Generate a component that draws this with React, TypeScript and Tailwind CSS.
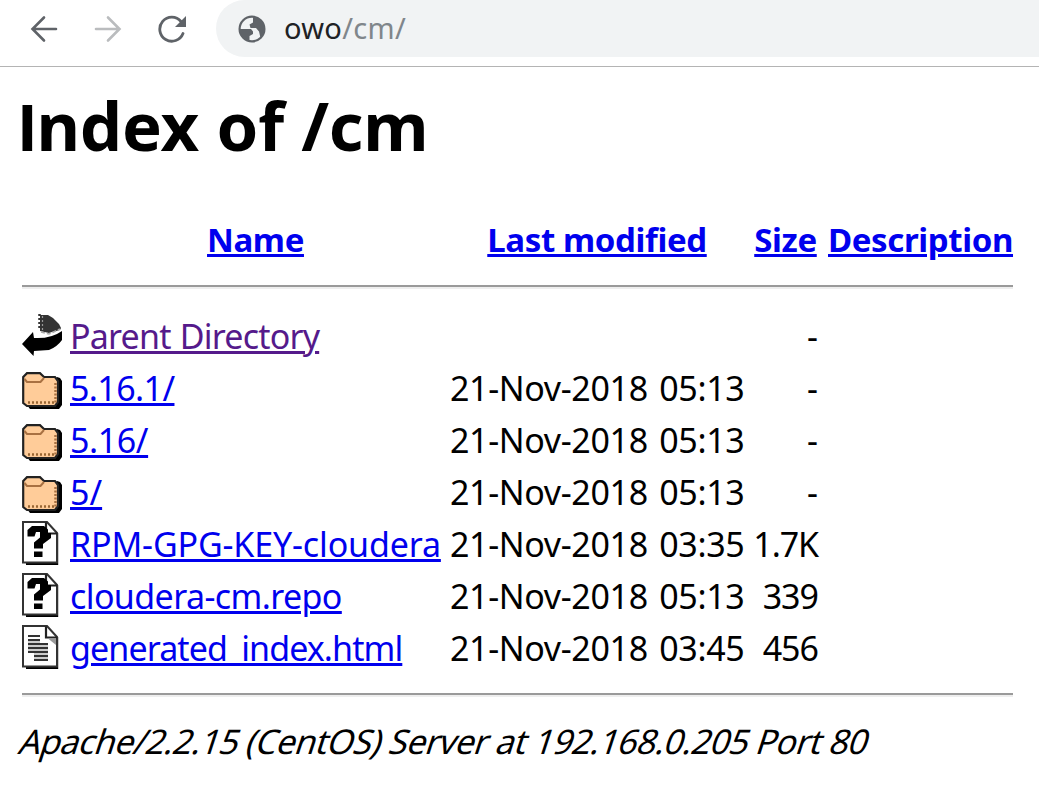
import { ReactNode } from "react";

function BackIcon() {
  return (
    <svg className="block" width="40" height="44" viewBox="0 0 40 44">
      <path d="M18 2H26L31 5L37 11L39 15L38 17L30 19L27 20L18 18Z" fill="#333" />
      <path d="M17.500 1V17" stroke="#333" strokeWidth="2.500" strokeDasharray="2 2" />
      <path d="M20.500 3V18" stroke="#999" strokeWidth="1.200" strokeDasharray="2 2" />
      <path d="M19 19L27 21L38 16" fill="none" stroke="#aaa" strokeWidth="1.500" strokeDasharray="4 2" />
      <path d="M0 31L11 19L12 25Q29 26 40 18L40 27Q35 34 27 37L12 38L11.500 43Z" fill="#000" />
    </svg>
  );
}

function FolderIcon() {
  return (
    <svg className="block" width="40" height="44" viewBox="0 0 40 44">
      <path d="M5 40L35 12L38 13L40 16V40L37 44H8Z" fill="#000" />
      <path d="M1.200 12L5 8.200H18L22 12H33L36 16V37L33 41H5L1.200 38Z" fill="#ffcc99" stroke="#222" strokeWidth="2.200" />
      <path d="M2.500 14L5 17H18.500L22 13" fill="none" stroke="#a97142" strokeWidth="2" />
      <path d="M6 37.500H33" stroke="#996633" strokeWidth="2.500" strokeDasharray="2 2" />
      <path d="M33.500 18V38" stroke="#a97142" strokeWidth="2.500" strokeDasharray="2 1.500" />
    </svg>
  );
}

function Page({ children }: { children: ReactNode }) {
  return (
    <svg className="block" width="40" height="44" viewBox="0 0 40 44">
      <path d="M4 40H33V12H36.200V44H4Z" fill="#000" />
      <path d="M1 1H25L35 12V41.500H1Z" fill="#fff" stroke="#333" strokeWidth="2" />
      <path d="M24 1.500V12.500H35" fill="none" stroke="#222" strokeWidth="2.200" />
      {children}
    </svg>
  );
}

function UnknownIcon() {
  return (
    <Page>
      <path d="M5.500 15.500V9L10 5H22L26 8.500V12H29V17L21 23V27.500H12V21.500L18 16.500V11H14L12.500 15.500Z" fill="#000" />
      <path d="M12 30.500H20.500V36H12Z" fill="#000" />
    </Page>
  );
}

function TextIcon() {
  return (
    <Page>
      <path d="M26 13.500H34V20Z" fill="#999" />
      <path d="M6 11H18M6 15H18M6 19H26M6 23H26M6 27H26M12 31H26M12 35H26" stroke="#333" strokeWidth="2.200" />
      <path d="M6 17H18M6 21H26M6 25H26M12 29H26M12 33H26" stroke="#ccc" strokeWidth="1.800" />
    </Page>
  );
}

const link = "underline decoration-[3px] underline-offset-[2px]";

const rows = [
  { Icon: BackIcon, name: "Parent Directory", date: "", size: "-", style: "text-[#551a8b] tracking-[-0.8px] [word-spacing:1px]", sizeStyle: "" },
  { Icon: FolderIcon, name: "5.16.1/", date: "21-Nov-2018 05:13", size: "-", style: "text-[#0000ee] tracking-[-0.6px]", sizeStyle: "" },
  { Icon: FolderIcon, name: "5.16/", date: "21-Nov-2018 05:13", size: "-", style: "text-[#0000ee] tracking-[-0.4px]", sizeStyle: "" },
  { Icon: FolderIcon, name: "5/", date: "21-Nov-2018 05:13", size: "-", style: "text-[#0000ee]", sizeStyle: "" },
  { Icon: UnknownIcon, name: "RPM-GPG-KEY-cloudera", date: "21-Nov-2018 03:35", size: "1.7K", style: "text-[#0000ee] tracking-[-0.15px]", sizeStyle: "tracking-[-1.1px]" },
  { Icon: UnknownIcon, name: "cloudera-cm.repo", date: "21-Nov-2018 05:13", size: "339", style: "text-[#0000ee] tracking-[-0.6px]", sizeStyle: "tracking-[-1px]" },
  { Icon: TextIcon, name: "generated_index.html", date: "21-Nov-2018 03:45", size: "456", style: "text-[#0000ee] tracking-[-0.9px]", sizeStyle: "tracking-[-1px]" },
];

const columns = "grid grid-cols-[40px_371px_296px_65px_185px] gap-x-[8px] items-center whitespace-nowrap";

function Rule() {
  return <div className="h-[4px] w-[991px] border-t-2 border-b-2 border-t-[#9a9a9a] border-b-[#eeeeee]" />;
}

export default function App() {
  return (
    <div className="h-[791px] w-[1039px] overflow-hidden bg-white font-['Noto_Sans',sans-serif] text-black">
      <header className="flex h-[67px] items-start border-b border-[#b4b4b4]">
        <div className="flex h-[57px] w-[216px] items-center pl-[30px]">
          <svg width="28" height="28" viewBox="0 0 28 28" fill="none" stroke="#5f6368" strokeWidth="2.6" strokeLinecap="round">
            <path d="M26 14H3M14 2.500L2.500 14L14 25.500" />
          </svg>
          <svg className="ml-[36px]" width="28" height="28" viewBox="0 0 28 28" fill="none" stroke="#babcbe" strokeWidth="2.6" strokeLinecap="round">
            <path d="M2 14H25M14 2.500L25.500 14L14 25.500" />
          </svg>
          <svg className="ml-[36px]" width="28" height="28" viewBox="0 0 28 28">
            <path d="M25 18.500A12 12 0 1 1 23 6.500" fill="none" stroke="#5f6368" strokeWidth="2.8" strokeLinecap="round" />
            <path d="M28 1V12H17Z" fill="#5f6368" />
          </svg>
        </div>
        <div className="flex h-[57px] flex-1 items-center rounded-l-full bg-[#f1f3f4] pl-[20px]">
          <svg width="32" height="32" viewBox="0 0 32 32">
            <circle cx="16" cy="16" r="12.400" fill="none" stroke="#5f6368" strokeWidth="2.200" />
            <path d="M17 3.500C24 4 29 10 28.500 17C28 21 26 23.500 24.500 25L23 18.500L20 15H14.500L13.500 11.500L17 9.500Z" fill="#5f6368" />
            <path d="M3.500 16H15L17 18.500V21L13.500 23V27.500L12 28C7 26 3.500 22 3.500 16Z" fill="#5f6368" />
          </svg>
          <span className="ml-[16px] pb-[1px] text-[29px] leading-[40px] tracking-[0.3px] text-[#202124]">
            owo<span className="text-[#80868b]">/cm/</span>
          </span>
        </div>
      </header>
      <main className="pl-[18px]">
        <h1 className="h-[141px] pt-[13px] text-[67px] leading-[90px] font-bold tracking-[-0.15px] first-letter:font-['Liberation_Sans']">Index of /cm</h1>
        <section className="pl-[4px]">
          <div className={columns + " h-[64px] text-center text-[33px] leading-[44px] font-bold tracking-[-0.38px] text-[#0000ee]"}>
            <span />
            <span><a className={link}>Name</a></span>
            <span><a className={link}>Last modified</a></span>
            <span><a className={link}>Size</a></span>
            <span className="pl-[2px]"><a className={link}>Description</a></span>
          </div>
          <div className="pt-[13px]"><Rule /></div>
          <div className="pt-[20px] pb-[20px]">
            {rows.map(({ Icon, name, date, size, style, sizeStyle }) => (
              <div key={name} className={columns + " h-[52px] text-[34px] leading-[44px]"}>
                <Icon />
                <span className={style + " pt-[2px]"}><a className={link}>{name}</a></span>
                <span className="pt-[2px] pl-[1px] tracking-[-0.35px] [word-spacing:3px]">{date}</span>
                <span className={sizeStyle + " pt-[2px] text-right"}>{size}</span>
              </div>
            ))}
          </div>
          <Rule />
        </section>
        <address className="-ml-[2px] origin-[0_60px] -skew-x-[18deg] pt-[20px] text-[34px] leading-[48px] whitespace-nowrap not-italic tracking-[-0.62px]">
          Apache/2.2.15 (CentOS) Server at 192.168.0.205 Port 80
        </address>
      </main>
    </div>
  );
}
